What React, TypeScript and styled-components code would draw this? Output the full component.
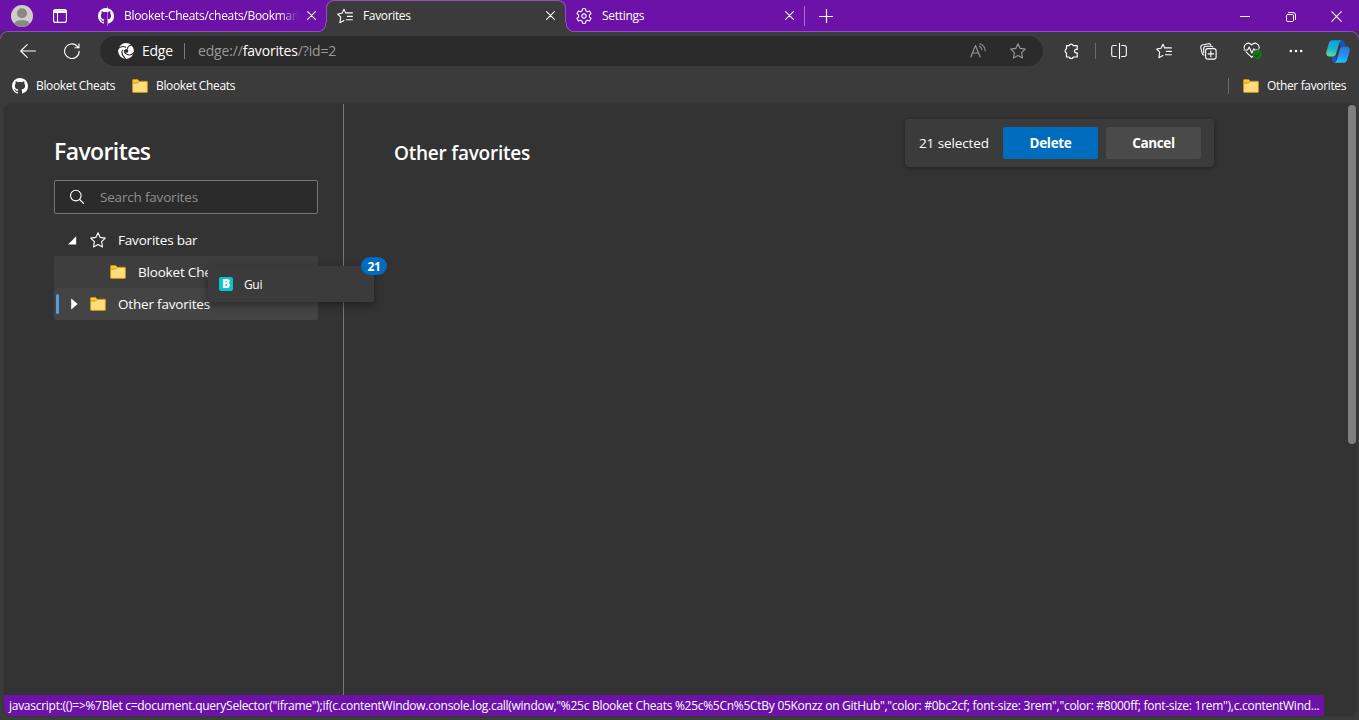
import React from "react";
import styled, { createGlobalStyle } from "styled-components";
import { VscGithubInverted } from "react-icons/vsc";

const c = {
  purple: "#6c12a8",
  line: "#9150bd",
  chrome: "#3b3b3b",
  field: "#2b2b2b",
  page: "#333333",
  blue: "#006cbe",
  text: "#ffffff",
};

const Global = createGlobalStyle`
  * { box-sizing: border-box; }
  body { margin: 0; background: ${c.chrome}; overflow: hidden; }
  svg { display: block; flex: none; }
`;

const Window = styled.div`
  position: relative;
  width: 1359px;
  height: 720px;
  display: flex;
  flex-direction: column;
  background: ${c.chrome};
  color: ${c.text};
  font-family: "Open Sans", "Noto Sans", sans-serif;
  font-size: 12px;
  overflow: hidden;
`;

const Label = styled.span<{ $size?: number; $ls?: number; $weight?: number; $color?: string }>`
  font-size: ${(p) => p.$size ?? 12}px;
  letter-spacing: ${(p) => p.$ls ?? (p.$size ? -0.19 : -0.35)}px;
  font-weight: ${(p) => p.$weight ?? 400};
  color: ${(p) => p.$color ?? c.text};
  line-height: 20px;
  white-space: nowrap;
`;

/* ---------- tab strip ---------- */
const TabStrip = styled.header`
  display: flex;
  height: 32px;
  background: ${c.purple};
  border-bottom: 1px solid ${c.line};
`;
const StripLead = styled.div`
  display: flex;
  align-items: center;
  gap: 20px;
  width: 88px;
  padding-left: 11px;
`;
const Rule = styled.i<{ $h: number; $color: string }>`
  width: 1px;
  height: ${(p) => p.$h}px;
  align-self: center;
  flex: none;
  background: ${(p) => p.$color};
`;
const Tab = styled.div<{ $w: number; $active?: boolean }>`
  position: relative;
  display: flex;
  align-items: center;
  gap: 10px;
  width: ${(p) => p.$w}px;
  height: ${(p) => (p.$active ? 32 : 31)}px;
  padding: 0 10px;
  ${(p) =>
    p.$active &&
    `padding-bottom: 2px; background: ${c.chrome}; border: 1px solid ${c.line}; border-bottom: 0; border-radius: 8px 8px 0 0;`}
`;
const TabTitle = styled(Label)<{ $fade?: boolean }>`
  flex: 1;
  overflow: hidden;
  ${(p) => p.$fade && "letter-spacing: -0.3px; margin-right: -2px; mask-image: linear-gradient(90deg, #000 calc(100% - 20px), transparent 100%);"}
`;
const Flare = styled.i<{ $side: "left" | "right" }>`
  position: absolute;
  bottom: 0;
  ${(p) => p.$side}: -9px;
  width: 10px;
  height: 9px;
  margin-${(p) => p.$side}: -1px;
  background: radial-gradient(
    circle at ${(p) => (p.$side === "left" ? "0" : "100%")} 0,
    ${c.purple} 8.2px, ${c.line} 8.6px, ${c.line} 9.1px, ${c.chrome} 9.5px
  );
`;
const FrameCorner = styled.i<{ $side: "left" | "right" }>`
  position: absolute;
  top: 31px;
  ${(p) => p.$side}: 0;
  width: 8px;
  height: 8px;
  background: radial-gradient(
    circle at ${(p) => (p.$side === "left" ? "100%" : "0")} 100%,
    ${c.chrome} 6.6px, #7c479e 7.200px, #7c479e 7.800px, #3d3046 8.400px
  );
`;
const Caption = styled.div`
  display: flex;
  margin-left: auto;
  padding-top: 1px;
`;
const CaptionButton = styled.div`
  width: 46px;
  height: 31px;
  padding-left: 1px;
  display: grid;
  place-items: center;
`;
const NewTab = styled.div`
  width: 42px;
  display: grid;
  place-items: center;
`;

/* ---------- toolbar ---------- */
const Toolbar = styled.nav`
  display: flex;
  align-items: center;
  height: 38px;
`;
const ToolButton = styled.div<{ $w?: number; $shift?: number }>`
  width: ${(p) => p.$w ?? 44}px;
  height: 38px;
  padding-left: ${(p) => p.$shift ?? 0}px;
  display: grid;
  place-items: center;
  flex: none;
`;
const Address = styled.div`
  display: flex;
  align-items: center;
  flex: none;
  width: 943px;
  height: 30px;
  margin-left: 12px;
  padding-left: 18px;
  border-radius: 15px;
  background: ${c.field};
`;
const Site = styled.div`
  display: flex;
  align-items: center;
  gap: 8px;
  width: 66px;
`;
const Url = styled(Label)`
  flex: 1;
  margin-left: 13px;
  b { font-weight: 400; color: #fff; }
`;
const Bookmarks = styled.div`
  display: flex;
  align-items: center;
  height: 34px;
  padding: 0 13px 2px 12px;
`;
const Bookmark = styled.div<{ $w: number }>`
  display: flex;
  align-items: center;
  gap: 8px;
  width: ${(p) => p.$w}px;
`;
const OtherBookmarks = styled(Bookmark)`
  margin-left: 14px;
`;
const Spacer = styled.div`
  flex: 1;
`;

/* ---------- page ---------- */
const Page = styled.main`
  display: flex;
  width: 1353px;
  height: 612px;
  margin-left: 4px;
  background: ${c.page};
  border-radius: 8px;
  box-shadow: 0 0 2px rgba(0, 0, 0, 0.25);
`;
const Sidebar = styled.aside`
  width: 340px;
  padding: 31px 25px 0 50px;
  border-right: 1px solid #767676;
`;
const Heading = styled.h1`
  margin: 0;
  height: 33px;
  font-size: 23px;
  line-height: 32px;
  font-weight: 600;
  letter-spacing: -0.6px;
`;
const Search = styled.div`
  display: flex;
  align-items: center;
  gap: 15px;
  height: 34px;
  margin: 12px 0 10px;
  padding-left: 14px;
  background: ${c.field};
  border: 1px solid #767676;
  border-radius: 2px;
`;
const TreeRow = styled.div<{ $bg?: string; $indent: number }>`
  position: relative;
  display: flex;
  align-items: center;
  gap: 12px;
  height: 32px;
  padding-left: ${(p) => p.$indent}px;
  border-radius: 2px;
  background: ${(p) => p.$bg ?? "transparent"};
`;
const ActiveMark = styled.i`
  position: absolute;
  left: 2px;
  top: 6px;
  width: 3px;
  height: 20px;
  border-radius: 2px;
  background: #4ea0e0;
`;
const Content = styled.section`
  flex: 1;
  display: flex;
  align-items: flex-start;
  justify-content: space-between;
  padding: 15px 134px 0 50px;
`;
const FolderTitle = styled.h2`
  margin: 20px 0 0;
  font-size: 19px;
  line-height: 28px;
  font-weight: 600;
  letter-spacing: -0.23px;
`;
const SelectionBar = styled.div`
  display: flex;
  align-items: center;
  gap: 8px;
  width: 309px;
  height: 48px;
  padding-left: 14px;
  border-radius: 4px;
  background: ${c.chrome};
  box-shadow: 0 1px 4px rgba(0, 0, 0, 0.35);
`;
const Count = styled(Label)`
  width: 76px;
`;
const Button = styled.div<{ $primary?: boolean }>`
  width: 95px;
  height: 32px;
  display: grid;
  place-items: center;
  border-radius: 2px;
  background: ${(p) => (p.$primary ? c.blue : "#4a4a4a")};
`;
const ScrollThumb = styled.div`
  width: 8px;
  height: 339px;
  margin: 1px 1px 0 0;
  border-radius: 4px;
  background: #7f7f7f;
`;

/* ---------- overlays ---------- */
const DragGhost = styled.div`
  position: absolute;
  left: 208px;
  top: 266px;
  width: 166px;
  height: 36px;
  display: flex;
  align-items: center;
  gap: 11px;
  padding-left: 11px;
  background: ${c.chrome};
  border-radius: 2px;
  box-shadow: 0 3px 8px rgba(0, 0, 0, 0.4);
`;
const GhostTitle = styled(Label)`
  padding-top: 2px;
`;
const BlooketIcon = styled.div`
  width: 14px;
  height: 14px;
  display: grid;
  place-items: center;
  border-radius: 2px;
  background: #0bc2cf;
  font-size: 12px;
  line-height: 14px;
  font-weight: 800;
`;
const Badge = styled.div`
  position: absolute;
  right: -13px;
  top: -9px;
  width: 26px;
  height: 18px;
  display: grid;
  place-items: center;
  border-radius: 9px;
  background: ${c.blue};
`;
const Status = styled.div`
  position: absolute;
  left: 4px;
  top: 695px;
  width: 1320px;
  height: 21px;
  padding-left: 5px;
  display: flex;
  align-items: center;
  background: ${c.purple};
  border-radius: 0 3px 0 8px;
`;

/* ---------- icons ---------- */
const line = { fill: "none", stroke: "#fff", strokeWidth: 1.1, strokeLinecap: "round", strokeLinejoin: "round" } as const;

const Avatar = () => (
  <svg width="22" height="22" viewBox="0 0 22 22">
    <clipPath id="av"><circle cx="11" cy="11" r="11" /></clipPath>
    <g clipPath="url(#av)">
      <rect width="22" height="22" fill="#cfcdcb" />
      <circle cx="11" cy="8.3" r="5" fill="#8b8886" />
      <path d="M2.5 22c0-5 3-6.8 8.500-6.800s8.500 1.800 8.500 6.800z" fill="#8b8886" />
    </g>
  </svg>
);
const TabMenu = () => (
  <svg width="14" height="14" viewBox="0 0 14 14" {...line}>
    <rect x=".6" y=".6" width="12.800" height="12.800" rx="2" />
    <path d="M1 2h12M1 3.300h12" strokeWidth="1.500" />
    <path d="M4.500 4v9" />
  </svg>
);
const Cross = ({ size = 9, w = 1.1 }: { size?: number; w?: number }) => (
  <svg width={size} height={size} viewBox="0 0 9 9" {...line} strokeWidth={w}>
    <path d="M.6.6l7.800 7.800M8.400.6L.6 8.400" />
  </svg>
);
const StarList = () => (
  <svg width="16" height="16" viewBox="0 0 16 16" {...line}>
    <path d="M8.600 4.900L7 1.300 5 5.300l-4.300.7 3 3.200-.8 5.500 4-2.100M8.600 4.900h6.800M10.400 8.400h5M9.400 11.800h6" />
  </svg>
);
const Star = ({ color = "#fff" }: { color?: string }) => (
  <svg width="16" height="16" viewBox="0 0 16 16" {...line} stroke={color}>
    <path d="M8 .8l2.200 4.600 5.100.7-3.700 3.500.9 5.300L8 12.500l-4.500 2.400.9-5.300L.7 6.100l5.100-.7z" />
  </svg>
);
const Gear = () => (
  <svg width="16" height="16" viewBox="0 0 16 16" {...line}>
    <circle cx="8" cy="8" r="2.100" />
    <path d="M6.500.8h3l.5 2.100 1.400.8 2.100-.7 1.500 2.600-1.600 1.500v1.800l1.600 1.500-1.500 2.600-2.100-.7-1.400.8-.5 2.100h-3L6 13.100l-1.400-.8-2.100.7L1 10.400l1.600-1.500V7.100L1 5.600 2.500 3l2.100.7L6 2.900z" />
  </svg>
);
const Plus = () => (
  <svg width="14" height="14" viewBox="0 0 14 14" {...line} strokeLinecap="butt" strokeWidth="1.200">
    <path d="M0 7.500h14M7.500 0v14" />
  </svg>
);
const Minimize = () => (
  <svg width="10" height="10" viewBox="0 0 10 10" {...line} strokeLinecap="butt" strokeWidth="1">
    <path d="M0 4.500h10" />
  </svg>
);
const Restore = () => (
  <svg width="10" height="10" viewBox="0 0 10 10" {...line} strokeWidth="1">
    <rect x=".5" y="2.500" width="7" height="7" rx="1.200" />
    <path d="M2.500.5h4.500a2.500 2.500 0 0 1 2.500 2.500v4.500" />
  </svg>
);
const Back = () => (
  <svg width="16" height="14" viewBox="0 0 16 14" {...line}>
    <path d="M15.500 7H.7M7.200.6L.7 7l6.500 6.400" />
  </svg>
);
const Refresh = () => (
  <svg width="16" height="16" viewBox="0 0 16 16" {...line}>
    <path d="M15.200 8.200A7.300 7.300 0 1 1 13 3L14.800 4.800M15 .8v4h-4" />
  </svg>
);
const EdgeLogo = () => (
  <svg width="16" height="16" viewBox="0 0 16 16">
    <circle cx="8" cy="8" r="7.900" fill="#fff" />
    <circle cx="8.400" cy="7.900" r="1.900" fill={c.field} />
    <g fill="none" stroke={c.field} strokeWidth="1.100" strokeLinecap="round">
      <path d="M0 6C1.600 3.600 5.200 2.900 7.800 4.200" />
      <path d="M13.600 2.200C11.500 2.300 9.600 3.700 9.500 5.800" />
      <path d="M15.800 9.700C14 12 11 12.400 8.800 11.300 6.900 10.300 6.100 9 6.400 7.600" />
      <path d="M4.300 7.200C3.500 10 4.800 13.500 7.400 15.700" />
    </g>
  </svg>
);
const ReadAloud = () => (
  <svg width="16" height="16" viewBox="0 0 16 16" {...line} stroke="#9a9a9a">
    <path d="M.8 14L5.500 2.500l4.700 11.500M2.500 10h6M9.300 3c1.500.8 2.300 2 2.500 3.800M10 .8c3.200 1.300 5 3.600 5.200 7" />
  </svg>
);
const Puzzle = () => (
  <svg width="16" height="16" viewBox="0 0 16 16" {...line} strokeWidth="1.200">
    <path d="M3.500 2.700h2.600a2.200 2.200 0 0 1 4.200 0H14.200v3.700h-1.100a1.700 1.700 0 0 0 0 3.400h1.100v4.200h-3.900a2.200 2.200 0 0 1-4.200 0H3.500v-4a2.300 2.300 0 0 1 0-4.200z" />
  </svg>
);
const Split = () => (
  <svg width="16" height="16" viewBox="0 0 16 16" {...line} strokeLinecap="butt">
    <path d="M5.700 2.500H2.500a1.800 1.800 0 0 0-1.800 1.800v7.400a1.800 1.800 0 0 0 1.800 1.800h3.200M10.300 2.500h3.200a1.800 1.800 0 0 1 1.800 1.800v7.400a1.800 1.800 0 0 1-1.800 1.800h-3.200M8.500 0v16" />
  </svg>
);
const Collections = () => (
  <svg width="17" height="17" viewBox="0 0 17 17" {...line}>
    <rect x="5.600" y="5.600" width="10.500" height="10.500" rx="2.200" />
    <path d="M10.850 8v5.700M8 10.850h5.700M3.900 12.300A3.500 3.500 0 0 1 1.900 9.700L.8 4.600A2.200 2.200 0 0 1 2.300 2L8.400.7a2.200 2.200 0 0 1 2.400 1.300M3.700 10V5.600A2.300 2.300 0 0 1 6 3.300h5.300a2 2 0 0 1 1.600.7" />
  </svg>
);
const Heart = () => (
  <svg width="20" height="18" viewBox="0 0 20 18">
    <g {...line}>
      <path d="M1.300 6.500C.3 2.200 5.500-.8 8.700 3 11.900-.8 17 2.200 16 6.500M3 9.800l5.700 5.500 2-1.900" />
      <path d="M1 8h3.600l1.600-3 2.600 6 2-4.200.8 1.200h4" />
    </g>
    <circle cx="14.200" cy="12.700" r="4.600" fill="#0f7a12" />
    <path d="M12 12.800l1.600 1.500 2.800-3" fill="none" stroke="#2b3b2b" strokeWidth="1.200" />
  </svg>
);
const Dots = () => (
  <svg width="14" height="4" viewBox="0 0 14 4" fill="#fff">
    <circle cx="1.800" cy="2" r="1.300" /><circle cx="7" cy="2" r="1.300" /><circle cx="12.200" cy="2" r="1.300" />
  </svg>
);
const Copilot = () => (
  <svg width="24" height="23" viewBox="0 0 24 23">
    <defs>
      <linearGradient id="cpA" x1="0.500" y1="0" x2="0.300" y2="1">
        <stop offset="0" stopColor="#0f9fe0" /><stop offset=".5" stopColor="#14b4d4" /><stop offset="1" stopColor="#5fdc90" />
      </linearGradient>
      <linearGradient id="cpB" x1="0.600" y1="0" x2="0.400" y2="1">
        <stop offset="0" stopColor="#2a72e6" /><stop offset=".6" stopColor="#2098f4" /><stop offset="1" stopColor="#1cc6fb" />
      </linearGradient>
    </defs>
    <path d="M13 .3h2.600c1.800 0 2.400 1 2.900 2.800l1 3.200h-5.500z" fill="#0b57c4" />
    <path d="M5.500 16.500h5L9.800 22.500H9c-1.700 0-2.400-1-2.800-2.500z" fill="#1d4fd8" />
    <path d="M6.500.3h9.200c-1.600.4-2.200 1.600-2.700 3.200L10.300 13c-.7 2.300-1.600 3.600-3.600 3.600H3.200C.8 16.600-.2 14.500.4 12L2.600 4C3.300 1.500 4.300.3 6.500.3z" fill="url(#cpA)" />
    <path d="M17.500 22.700H8.300c1.600-.4 2.200-1.600 2.700-3.200l2.700-9.500c.7-2.300 1.600-3.600 3.600-3.600h3.500c2.400 0 3.400 2.100 2.800 4.600L21.400 19c-.7 2.500-1.700 3.700-3.900 3.700z" fill="url(#cpB)" />
  </svg>
);
const Folder = () => (
  <svg width="16" height="14" viewBox="0 0 16 14">
    <path d="M.6 1.200Q.6.500 1.300.5H5.600L7.400 2.300H14.800q.6 0 .6.700V12.700q0 .7-.7.700H1.300q-.7 0-.7-.7z" fill="#ffdc7c" stroke="#c5941a" />
    <path d="M1.100 1H5.400L6.600 2.300 5.400 3.700H1.100z" fill="#ffc928" />
    <path d="M.6 4H5.500L7.200 2.300" fill="none" stroke="#c5941a" />
  </svg>
);
const Magnifier = () => (
  <svg width="16" height="16" viewBox="0 0 16 16" {...line}>
    <circle cx="6.800" cy="6.600" r="5.300" /><path d="M10.700 10.500l4 4" />
  </svg>
);
const Expanded = () => (
  <svg width="10" height="9" viewBox="0 0 10 9" fill="#fff"><path d="M8.200.2v8.300H0z" /></svg>
);
const Collapsed = () => (
  <svg width="7" height="12" viewBox="0 0 7 12" fill="#fff"><path d="M.2.400L6.700 6 .2 11.600z" /></svg>
);

export default function App() {
  return (
    <Window>
      <Global />
      <TabStrip>
        <StripLead>
          <Avatar />
          <TabMenu />
          <Spacer />
          <Rule $h={20} $color="#a673ca" />
        </StripLead>
        <Tab $w={238}>
          <VscGithubInverted size={16} />
          <TabTitle $fade>Blooket-Cheats/cheats/Bookmarklets</TabTitle>
          <Cross />
        </Tab>
        <Tab $w={240} $active>
          <Flare $side="left" />
          <StarList />
          <TabTitle>Favorites</TabTitle>
          <Cross />
          <Flare $side="right" />
        </Tab>
        <Tab $w={238}>
          <Gear />
          <TabTitle $ls={-0.3}>Settings</TabTitle>
          <Cross />
        </Tab>
        <Rule $h={20} $color="#a673ca" />
        <NewTab><Plus /></NewTab>
        <Caption>
          <CaptionButton><Minimize /></CaptionButton>
          <CaptionButton><Restore /></CaptionButton>
          <CaptionButton><Cross size={11} w={0.9} /></CaptionButton>
        </Caption>
      </TabStrip>
      <FrameCorner $side="left" />
      <FrameCorner $side="right" />

      <Toolbar>
        <ToolButton $w={56}><Back /></ToolButton>
        <ToolButton $w={32}><Refresh /></ToolButton>
        <Address>
          <Site>
            <EdgeLogo />
            <Label $size={14} $ls={-0.25}>Edge</Label>
          </Site>
          <Rule $h={16} $color="#7a7a7a" />
          <Url $size={14} $ls={-0.17} $color="#9a9a9a">edge://<b>favorites</b>/?id=2</Url>
          <ToolButton $w={30}><ReadAloud /></ToolButton>
          <ToolButton $w={50}><Star color="#9a9a9a" /></ToolButton>
        </Address>
        <ToolButton $w={52} $shift={4}><Puzzle /></ToolButton>
        <Rule $h={16} $color="#6a6a6a" />
        <ToolButton $w={46}><Split /></ToolButton>
        <ToolButton><StarList /></ToolButton>
        <ToolButton><Collections /></ToolButton>
        <ToolButton $shift={2}><Heart /></ToolButton>
        <ToolButton><Dots /></ToolButton>
        <ToolButton $w={39}><Copilot /></ToolButton>
      </Toolbar>

      <Bookmarks>
        <Bookmark $w={120}>
          <VscGithubInverted size={16} />
          <Label>Blooket Cheats</Label>
        </Bookmark>
        <Bookmark $w={120}>
          <Folder />
          <Label>Blooket Cheats</Label>
        </Bookmark>
        <Spacer />
        <Rule $h={16} $color="#6a6a6a" />
        <OtherBookmarks $w={103}>
          <Folder />
          <Label>Other favorites</Label>
        </OtherBookmarks>
      </Bookmarks>

      <Page>
        <Sidebar>
          <Heading>Favorites</Heading>
          <Search>
            <Magnifier />
            <Label $size={13.500} $color="#8f8f8f">Search favorites</Label>
          </Search>
          <TreeRow $indent={14}>
            <Expanded />
            <Star />
            <Label $size={13.500}>Favorites bar</Label>
          </TreeRow>
          <TreeRow $indent={56} $bg="#3e3e3e">
            <Folder />
            <Label $size={13.500}>Blooket Cheats</Label>
          </TreeRow>
          <TreeRow $indent={17} $bg="#444444">
            <ActiveMark />
            <Collapsed />
            <Folder />
            <Label $size={13.500}>Other favorites</Label>
          </TreeRow>
        </Sidebar>
        <Content>
          <FolderTitle>Other favorites</FolderTitle>
          <SelectionBar>
            <Count $size={13.500} $ls={-0.1}>21 selected</Count>
            <Button $primary><Label $size={13.500} $weight={700} $ls={-0.35}>Delete</Label></Button>
            <Button><Label $size={13.500} $weight={700} $ls={-0.35}>Cancel</Label></Button>
          </SelectionBar>
        </Content>
        <ScrollThumb />
      </Page>

      <DragGhost>
        <BlooketIcon>B</BlooketIcon>
        <GhostTitle>Gui</GhostTitle>
        <Badge><Label $weight={700}>21</Label></Badge>
      </DragGhost>

      <Status>
        <Label $ls={-0.275}>
          {'javascript:(()=>%7Blet c=document.querySelector("iframe");if(c.contentWindow.console.log.call(window,"%25c Blooket Cheats %25c%5Cn%5CtBy 05Konzz on GitHub","color: #0bc2cf; font-size: 3rem","color: #8000ff; font-size: 1rem"),c.contentWind...'}
        </Label>
      </Status>
    </Window>
  );
}
